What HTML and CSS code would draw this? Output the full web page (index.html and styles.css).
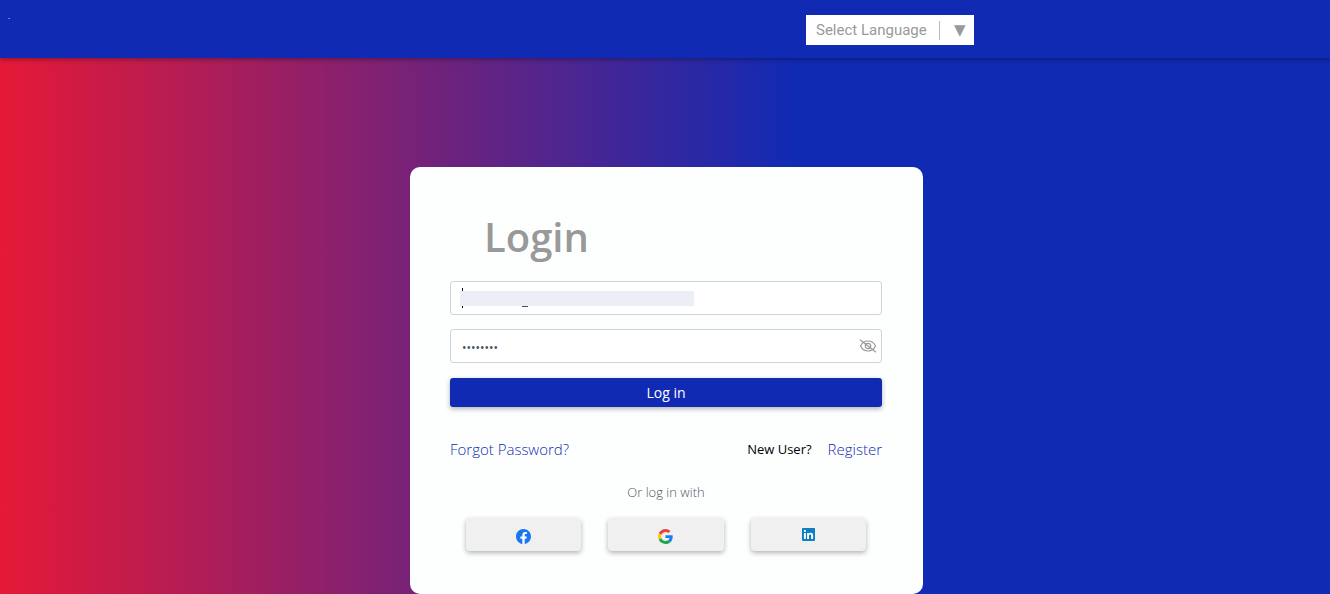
FILE: index.html
```
<!DOCTYPE html>
<html lang="en">
<head>
    <meta charset="UTF-8">
    <meta name="viewport" content="width=device-width, initial-scale=1.0">
    <title>Login</title>
    <link rel="stylesheet" href="styles.css">
</head>
<body>
    <header class="topbar">
        <a class="brand" href="#">.</a>
        <div class="translate">
            <select aria-label="Select Language">
                <option>Select Language</option>
                <option>English</option>
                <option>French</option>
                <option>Spanish</option>
            </select>
            <span class="arrow">▼</span>
        </div>
    </header>

    <main>
        <form class="card">
            <h1>Login</h1>

            <div class="field">
                <input type="text" name="email" aria-label="Email">
                <span class="caret"></span>
                <span class="underscore"></span>
                <span class="mask"></span>
            </div>

            <div class="field">
                <input type="password" name="password" value="password" aria-label="Password">
                <button type="button" class="toggle" aria-label="Show password">
                    <svg width="18" height="14" viewBox="0 0 18 14" fill="none" stroke="#999" stroke-width="1.2">
                        <path d="M1.5 7C3 3.800 5.800 2 9 2s6 1.800 7.500 5c-1.500 3.200-4.300 5-7.500 5S3 10.200 1.500 7z"/>
                        <circle cx="9" cy="7" r="2.700"/>
                        <path d="M1 .8l16 12.400"/>
                    </svg>
                </button>
            </div>

            <button type="submit" class="login">Log in</button>

            <div class="links">
                <a href="#">Forgot Password?</a>
                <div class="register">
                    <span>New User?</span>
                    <a href="#">Register</a>
                </div>
            </div>

            <p class="or">Or log in with</p>

            <div class="social">
                <button type="button" aria-label="Facebook">
                    <svg width="15" height="15" viewBox="0 0 24 24">
                        <circle cx="12" cy="12" r="11.500" fill="#fff"/>
                        <path fill="#1877f2" d="M24 12.073C24 5.405 18.627 0 12 0S0 5.405 0 12.073C0 18.100 4.388 23.094 10.125 24v-8.437H7.078v-3.490h3.047v-2.660c0-3.025 1.792-4.697 4.533-4.697 1.312 0 2.686.236 2.686.236v2.971h-1.513c-1.491 0-1.956.930-1.956 1.886v2.264h3.328l-.532 3.490h-2.796V24C19.612 23.094 24 18.100 24 12.073z"/>
                    </svg>
                </button>
                <button type="button" aria-label="Google">
                    <svg width="15" height="15" viewBox="0 0 48 48">
                        <path fill="#ea4335" d="M24 9.500c3.540 0 6.710 1.220 9.210 3.600l6.850-6.850C35.900 2.380 30.470 0 24 0 14.620 0 6.510 5.380 2.560 13.220l7.980 6.190C12.430 13.720 17.740 9.500 24 9.500z"/>
                        <path fill="#1a7cf0" d="M46.980 24.550c0-1.570-.150-3.090-.380-4.550H24v9.020h12.940c-.580 2.960-2.260 5.480-4.780 7.180l7.730 6c4.510-4.180 7.090-10.360 7.090-17.650z"/>
                        <path fill="#fcc800" d="M10.530 28.590c-.480-1.450-.760-2.990-.760-4.590s.270-3.140.760-4.590l-7.980-6.190C.920 16.460 0 20.120 0 24s.920 7.540 2.560 10.780l7.970-6.190z"/>
                        <path fill="#1fa446" d="M24 48c6.480 0 11.930-2.130 15.890-5.810l-7.730-6c-2.150 1.450-4.920 2.300-8.160 2.300-6.260 0-11.570-4.220-13.470-9.910l-7.980 6.190C6.510 42.620 14.620 48 24 48z"/>
                    </svg>
                </button>
                <button type="button" class="linkedin" aria-label="LinkedIn">
                    <svg width="13" height="13" viewBox="0 0 24 24">
                        <rect x="1" y="1" width="22" height="22" fill="#fff"/>
                        <path fill="#0a7fc1" d="M20.447 20.452h-3.554v-5.569c0-1.328-.027-3.037-1.852-3.037-1.853 0-2.136 1.445-2.136 2.939v5.667H9.351V9h3.414v1.561h.046c.477-.900 1.637-1.850 3.370-1.850 3.601 0 4.267 2.370 4.267 5.455v6.286zM5.337 7.433a2.062 2.062 0 1 1 0-4.125 2.062 2.062 0 0 1 0 4.125zm1.782 13.019H3.555V9h3.564v11.452zM22.225 0H1.771C.792 0 0 .774 0 1.729v20.542C0 23.227.792 24 1.771 24h20.451C23.200 24 24 23.227 24 22.271V1.729C24 .774 23.200 0 22.222 0h.003z"/>
                    </svg>
                </button>
            </div>
        </form>
    </main>
</body>
</html>
```
FILE: styles.css
```
* {
    box-sizing: border-box;
}

body {
    margin: 0;
    min-height: 100vh;
    font-family: "Segoe UI", "Open Sans", sans-serif;
    background: linear-gradient(to right, #e51937 0%, #102ab4 60%);
}

button, input, select {
    font-family: inherit;
}

.topbar {
    display: flex;
    justify-content: space-between;
    align-items: flex-start;
    height: 58px;
    padding: 15px 356px 0 8px;
    background-color: #102ab4;
    box-shadow: 0 1px 5px rgba(0, 0, 0, 0.4);
}

.brand {
    color: white;
    font-size: 8px;
    line-height: 2px;
    text-decoration: none;
}

.translate {
    display: flex;
    align-items: center;
    width: 168px;
    height: 30px;
    padding-left: 10px;
    background-color: white;
    color: #999;
}

.translate select {
    appearance: none;
    width: 123px;
    padding: 0;
    border: none;
    background: none;
    color: #999;
    font-family: Roboto, sans-serif;
    font-size: 15px;
}

.arrow {
    width: 35px;
    padding-left: 14px;
    border-left: 1px solid #bbb;
    font-family: "DejaVu Sans", sans-serif;
    font-size: 15px;
    line-height: 19px;
}

main {
    padding: 109px 0 0 3px;
}

.card {
    width: 100%;
    max-width: 513px;
    margin: 0 auto;
    padding: 40px 41px 43px 40px;
    background-color: #fdfffe;
    border-radius: 10px;
}

h1 {
    margin: 0 0 14px 34px;
    color: #999;
    font-size: 40px;
    font-weight: 600;
    line-height: 60px;
}

.field {
    position: relative;
    margin-bottom: 14px;
}

.field input {
    display: block;
    width: 100%;
    height: 34px;
    padding: 0 32px 0 11px;
    border: 1px solid #ced4da;
    border-radius: 3px;
    background-color: white;
    color: #495057;
    font-size: 13px;
}

.field input[type="password"] {
    padding-top: 2px;
    font-size: 12px;
}

/* covers the stored address */
.mask {
    position: absolute;
    left: 10px;
    top: 10px;
    width: 234px;
    height: 15px;
    background-color: #ebedf7;
}

.caret {
    position: absolute;
    left: 12px;
    top: 7px;
    width: 1px;
    height: 20px;
    background-color: black;
}

.underscore {
    position: absolute;
    left: 72px;
    top: 25px;
    width: 6px;
    height: 1px;
    background-color: #495057;
}

.toggle {
    position: absolute;
    right: 5px;
    top: 10px;
    display: flex;
    padding: 0;
    border: none;
    background: none;
}

.login {
    display: block;
    width: 100%;
    height: 29px;
    margin-top: 15px;
    padding: 0;
    border: none;
    border-radius: 3px;
    background-color: #102ab4;
    box-shadow: 0 2px 5px rgba(0, 0, 0, 0.3);
    color: white;
    font-size: 14px;
}

.links {
    display: flex;
    justify-content: space-between;
    margin-top: 31px;
    font-size: 15px;
    line-height: 22px;
}

.links a {
    color: #102ab4;
    font-weight: 300;
    text-decoration: none;
}

.register {
    display: flex;
    gap: 16px;
}

.register span {
    color: black;
    font-size: 13px;
    font-weight: 500;
}

.or {
    margin: 20px 0 14px;
    color: #555;
    font-size: 13px;
    font-weight: 300;
    line-height: 24px;
    text-align: center;
}

.social {
    display: grid;
    grid-template-columns: repeat(3, 1fr);
    gap: 27px;
    padding: 0 16px;
}

.social button {
    display: flex;
    justify-content: center;
    align-items: center;
    height: 33px;
    padding: 4px 0 0;
    border: none;
    border-radius: 4px;
    background-color: #f0f0f0;
    box-shadow: 0 2px 5px rgba(0, 0, 0, 0.3);
}

.social .linkedin {
    padding-top: 0;
}
```
